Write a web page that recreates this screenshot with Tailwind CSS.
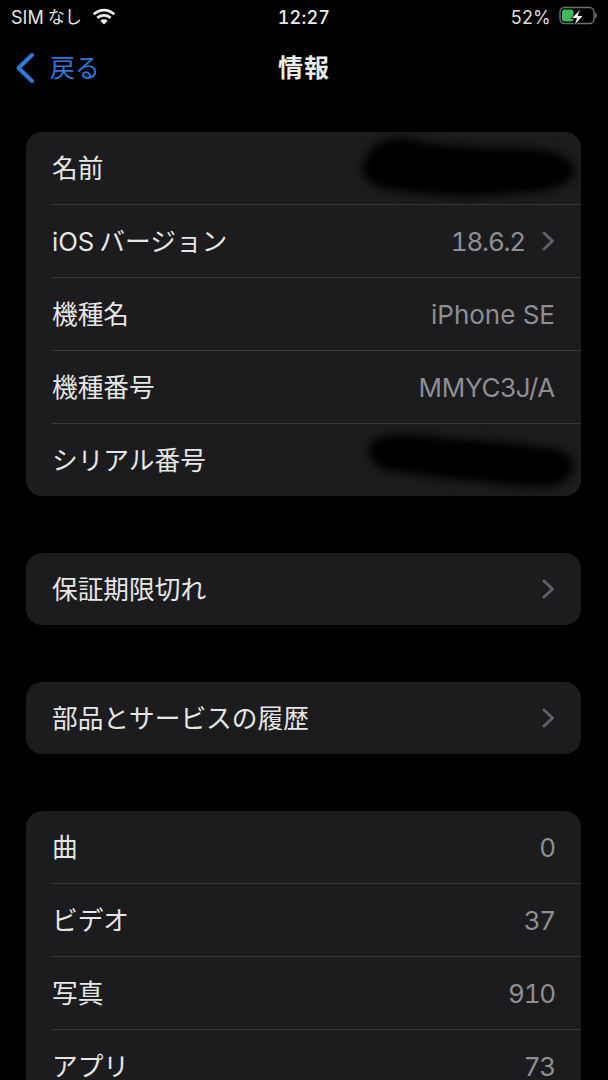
<!DOCTYPE html>
<html lang="ja">
<head>
  <meta charset="UTF-8" />
  <meta name="viewport" content="width=device-width, initial-scale=1.0" />
  <title>情報</title>
  <script src="https://cdn.jsdelivr.net/npm/@tailwindcss/browser@4"></script>
</head>
<body class="bg-black w-[608px] h-[1080px] overflow-hidden text-white font-['Inter','Noto_Sans_CJK_JP',sans-serif]">
  <!-- status bar -->
  <div class="h-[34px] px-[11px] flex items-center justify-between text-[18px] text-[#e4e4e4] relative">
    <div class="flex items-center">
      <span class="mt-[1px]">SIM</span>
      <span class="ml-[4px] mt-[1px] text-[17px]">なし</span>
      <svg class="ml-[10px]" width="24" height="18" viewBox="0 0 24 18" fill="#eee">
        <path d="M12 3.500c3.600 0 6.900 1.400 9.400 3.700l1.800-1.900C20.200 2.400 16.300.7 12 .7S3.800 2.400.8 5.300l1.800 1.900C5.100 4.900 8.400 3.500 12 3.500z"/>
        <path d="M12 8.700c2.200 0 4.200.8 5.700 2.200l1.900-1.900C17.600 7.100 14.900 6 12 6S6.400 7.100 4.400 9l1.900 1.900c1.500-1.400 3.500-2.200 5.700-2.200z"/>
        <path d="M12 11.200c-1.500 0-2.800.6-3.800 1.500L12 16.600l3.800-3.900c-1-.9-2.300-1.500-3.800-1.500z"/>
      </svg>
    </div>
    <span class="absolute left-[250px] w-[108px] text-center font-medium text-[18px] tracking-[0.2px] tabular-nums text-[#ececec] mt-[1px]">12:27</span>
    <div class="flex items-center gap-[8px] mr-[-1px]">
      <span class="text-[#dcdcdc] mt-[1px] tracking-[0.2px]">52%</span>
      <svg width="39" height="22" viewBox="0 0 39 22">
        <rect x="1" y="1.500" width="34" height="16" rx="4.500" fill="none" stroke="#6f6f6f" stroke-width="1.400"/>
        <path d="M36 6.500c1.200.4 1.800 1.500 1.800 3s-.6 2.600-1.800 3z" fill="#6f6f6f"/>
        <rect x="3" y="3.500" width="11.500" height="12" rx="2.500" fill="#3dbb5a"/>
        <path d="M22.500 2 12 12.500h5.500L14.500 20.500 24.500 9.500H19z" fill="#f4f4f4" stroke="#000" stroke-width="1"/>
      </svg>
    </div>
  </div>

  <!-- nav bar -->
  <div class="h-[68px] relative flex items-center justify-center">
    <div class="absolute left-[15px] top-[18px] flex items-center gap-[15px] text-[#2f78dc]">
      <svg width="20" height="32" viewBox="0 0 20 32" fill="none" stroke="#2f78dc" stroke-width="4" stroke-linecap="round" stroke-linejoin="round">
        <path d="M17 3 3.500 16 17 29"/>
      </svg>
      <span class="text-[25px] leading-[32px] tracking-[-0.3px]">戻る</span>
    </div>
    <span class="text-[25px] font-bold leading-[32px] text-[#ececec] tracking-[1px]">情報</span>
  </div>

  <div class="mx-[26px] w-[555px] flex flex-col gap-[57px] mt-[30px] text-[25.7px] leading-[32px] text-[#e6e6e6]">
    <!-- device info -->
    <div class="relative bg-[#1c1c1e] rounded-[16px] overflow-hidden">
      <div class="h-[72px] pl-[26px] pr-[26px] flex items-center"><span class="mt-[1px]">名前</span></div>
      <div class="ml-[26px] h-px bg-[#38383a]"></div>
      <div class="h-[72px] pl-[26px] pr-[26px] flex items-center justify-between">
        <span class="mt-[1px]">iOS<span class="ml-[5px]">バージョン</span></span>
        <div class="flex items-center gap-[17px] text-[#8e8e93]">
          <span class="mt-[1px] text-[26px] tabular-nums tracking-[-1.2px]">18.6.2</span>
          <svg width="13" height="20" viewBox="0 0 13 20" fill="none" stroke="#5f5f63" stroke-width="3" stroke-linecap="round" stroke-linejoin="round"><path d="M2 2l8.500 8L2 18"/></svg>
        </div>
      </div>
      <div class="ml-[26px] h-px bg-[#38383a]"></div>
      <div class="h-[72px] pl-[26px] pr-[26px] flex items-center justify-between">
        <span class="mt-[1px]">機種名</span><span class="mt-[1px] text-[#8e8e93] text-[26px]">iPhone SE</span>
      </div>
      <div class="ml-[26px] h-px bg-[#38383a]"></div>
      <div class="h-[72px] pl-[26px] pr-[26px] flex items-center justify-between">
        <span class="mt-[1px]">機種番号</span><span class="mt-[1px] text-[#8e8e93] text-[26px] tracking-[-0.3px]">MMYC3J/A</span>
      </div>
      <div class="ml-[26px] h-px bg-[#38383a]"></div>
      <div class="h-[72px] pl-[26px] pr-[26px] flex items-center"><span class="mt-[1px]">シリアル番号</span></div>

      <!-- redacted scribbles -->
      <svg class="absolute left-[320px] top-0 blur-[4px]" width="235" height="364" viewBox="0 0 235 364" fill="#000">
        <path d="M18 30C26 8 50 3 70 8 90 14 120 15 160 16 200 15 225 22 228 38 230 52 205 60 170 61 120 68 70 62 41 57 21 54 14 42 18 30Z"/>
        <path d="M26 310C31 302 60 301 100 306 150 310 200 312 222 322 232 335 228 350 200 355 150 353 90 346 46 339 24 336 20 320 26 310Z"/>
      </svg>
    </div>

    <div class="bg-[#1c1c1e] rounded-[16px] h-[72px] pl-[26px] pr-[26px] flex items-center justify-between">
      <span class="mt-[1px]">保証期限切れ</span>
      <svg width="13" height="20" viewBox="0 0 13 20" fill="none" stroke="#5f5f63" stroke-width="3" stroke-linecap="round" stroke-linejoin="round"><path d="M2 2l8.500 8L2 18"/></svg>
    </div>

    <div class="bg-[#1c1c1e] rounded-[16px] h-[72px] pl-[26px] pr-[26px] flex items-center justify-between">
      <span class="mt-[1px]">部品とサービスの履歴</span>
      <svg width="13" height="20" viewBox="0 0 13 20" fill="none" stroke="#5f5f63" stroke-width="3" stroke-linecap="round" stroke-linejoin="round"><path d="M2 2l8.500 8L2 18"/></svg>
    </div>

    <!-- counts -->
    <div class="bg-[#1c1c1e] rounded-t-[16px]">
      <div class="h-[72px] pl-[26px] pr-[26px] flex items-center justify-between"><span class="mt-[1px]">曲</span><span class="mt-[1px] text-[#8e8e93] text-[26px] tabular-nums tracking-[-1.2px]">0</span></div>
      <div class="ml-[26px] h-px bg-[#38383a]"></div>
      <div class="h-[72px] pl-[26px] pr-[26px] flex items-center justify-between"><span class="mt-[1px]">ビデオ</span><span class="mt-[1px] text-[#8e8e93] text-[26px] tabular-nums tracking-[-1.2px]">37</span></div>
      <div class="ml-[26px] h-px bg-[#38383a]"></div>
      <div class="h-[72px] pl-[26px] pr-[26px] flex items-center justify-between"><span class="mt-[1px]">写真</span><span class="mt-[1px] text-[#8e8e93] text-[26px] tabular-nums tracking-[-1.2px]">910</span></div>
      <div class="ml-[26px] h-px bg-[#38383a]"></div>
      <div class="h-[72px] pl-[26px] pr-[26px] flex items-center justify-between"><span class="mt-[1px]">アプリ</span><span class="mt-[1px] text-[#8e8e93] text-[26px] tabular-nums tracking-[-1.2px]">73</span></div>
    </div>
  </div>
</body>
</html>
